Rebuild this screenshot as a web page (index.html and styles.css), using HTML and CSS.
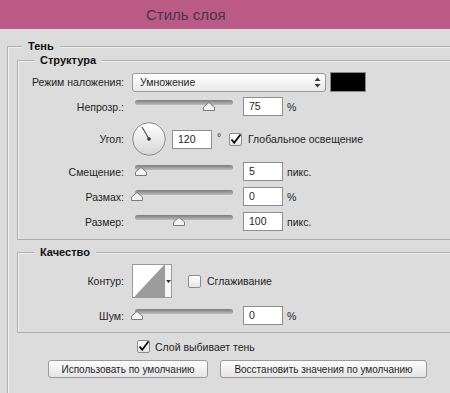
FILE: index.html
```html
<!DOCTYPE html>
<html lang="ru">
<head>
    <meta charset="UTF-8">
    <title>Стиль слоя</title>
    <link rel="stylesheet" href="styles.css">
</head>
<body>
    <div class="titlebar">Стиль слоя</div>
    <div class="dialog">
        <div class="group group-outer">
            <div class="group-title">Тень</div>

            <div class="group group-inner">
                <div class="group-title">Структура</div>
                <div class="rows rows-structure">
                    <div class="row row-blend">
                        <span class="label">Режим наложения:</span>
                        <div class="select">
                            <span>Умножение</span>
                            <svg width="7" height="11" viewBox="0 0 7 11"><path d="M3.5 0.5 L6.5 4 L0.5 4 Z M0.5 7 L6.5 7 L3.5 10.5 Z" fill="#3a3a3a"/></svg>
                        </div>
                        <div class="swatch"></div>
                    </div>

                    <div class="row">
                        <span class="label">Непрозр.:</span>
                        <div class="slider">
                            <div class="track"></div>
                            <svg class="thumb" style="left: 71px" viewBox="0 0 12 9"><path d="M6 0.5 L11.5 5 L11.5 8.5 L0.5 8.5 L0.5 5 Z" fill="#f4f4f4" stroke="#7a7a7a"/></svg>
                        </div>
                        <div class="field">75</div>
                        <span class="unit">%</span>
                    </div>

                    <div class="row row-angle">
                        <span class="label">Угол:</span>
                        <svg class="dial" width="34" height="34" viewBox="0 0 34 34">
                            <defs>
                                <linearGradient id="dialFill" x1="0" y1="0" x2="0" y2="1">
                                    <stop offset="0" stop-color="#ffffff"/>
                                    <stop offset="1" stop-color="#d6d6d6"/>
                                </linearGradient>
                            </defs>
                            <circle cx="17" cy="17" r="16.3" fill="url(#dialFill)" stroke="#8a8a8a"/>
                            <line x1="17" y1="17" x2="10" y2="5" stroke="#555" stroke-width="1.2"/>
                            <circle cx="17" cy="17" r="1.8" fill="#333"/>
                        </svg>
                        <div class="field">120</div>
                        <span class="deg">°</span>
                        <span class="check">
                            <svg width="13" height="13" viewBox="0 0 13 13"><path d="M2.5 6.5 L5.2 9.8 L11.5 1.5" fill="none" stroke="#111" stroke-width="1.9"/></svg>
                        </span>
                        <span class="check-text">Глобальное освещение</span>
                    </div>

                    <div class="row">
                        <span class="label">Смещение:</span>
                        <div class="slider">
                            <div class="track"></div>
                            <svg class="thumb" style="left: 3px" viewBox="0 0 12 9"><path d="M6 0.5 L11.5 5 L11.5 8.5 L0.5 8.5 L0.5 5 Z" fill="#f4f4f4" stroke="#7a7a7a"/></svg>
                        </div>
                        <div class="field">5</div>
                        <span class="unit">пикс.</span>
                    </div>

                    <div class="row">
                        <span class="label">Размах:</span>
                        <div class="slider">
                            <div class="track"></div>
                            <svg class="thumb" style="left: -1px" viewBox="0 0 12 9"><path d="M6 0.5 L11.5 5 L11.5 8.5 L0.5 8.5 L0.5 5 Z" fill="#f4f4f4" stroke="#7a7a7a"/></svg>
                        </div>
                        <div class="field">0</div>
                        <span class="unit">%</span>
                    </div>

                    <div class="row">
                        <span class="label">Размер:</span>
                        <div class="slider">
                            <div class="track"></div>
                            <svg class="thumb" style="left: 41px" viewBox="0 0 12 9"><path d="M6 0.5 L11.5 5 L11.5 8.5 L0.5 8.5 L0.5 5 Z" fill="#f4f4f4" stroke="#7a7a7a"/></svg>
                        </div>
                        <div class="field">100</div>
                        <span class="unit">пикс.</span>
                    </div>
                </div>
            </div>

            <div class="group group-inner group-quality">
                <div class="group-title">Качество</div>
                <div class="rows rows-quality">
                    <div class="row row-contour">
                        <span class="label">Контур:</span>
                        <div class="contour">
                            <div class="contour-curve">
                                <svg width="31" height="32" viewBox="0 0 31 32"><path d="M2 31 L31 0 L31 32 L2 32 Z" fill="#9c9c9c"/></svg>
                            </div>
                            <div class="contour-drop">
                                <svg width="5" height="3" viewBox="0 0 5 3"><path d="M0 0 L5 0 L2.5 3 Z" fill="#333"/></svg>
                            </div>
                        </div>
                        <span class="check check-smooth"></span>
                        <span class="check-text">Сглаживание</span>
                    </div>

                    <div class="row">
                        <span class="label">Шум:</span>
                        <div class="slider">
                            <div class="track"></div>
                            <svg class="thumb" style="left: -1px" viewBox="0 0 12 9"><path d="M6 0.5 L11.5 5 L11.5 8.5 L0.5 8.5 L0.5 5 Z" fill="#f4f4f4" stroke="#7a7a7a"/></svg>
                        </div>
                        <div class="field">0</div>
                        <span class="unit">%</span>
                    </div>
                </div>
            </div>

            <div class="knockout">
                <span class="check">
                    <svg width="13" height="13" viewBox="0 0 13 13"><path d="M2.5 6.5 L5.2 9.8 L11.5 1.5" fill="none" stroke="#111" stroke-width="1.9"/></svg>
                </span>
                <span class="check-text">Слой выбивает тень</span>
            </div>

            <div class="buttons">
                <button class="btn btn-default">Использовать по умолчанию</button>
                <button class="btn btn-reset">Восстановить значения по умолчанию</button>
            </div>
        </div>
    </div>
</body>
</html>
```

FILE: styles.css
```css
body {
    margin: 0;
    background-color: #dcdcdc;
    color: #1f1f1f;
    font-family: "Liberation Sans", Arial, sans-serif;
    font-size: 10.5px;
    overflow: hidden;
}
.titlebar {
    height: 29px;
    line-height: 29px;
    padding-left: 146px;
    background-color: #bb5a85;
    color: #47354a;
    font-size: 15px;
}
.dialog {
    width: 450px;
}
.group {
    border: 1px solid #aeaeae;
    border-right: none;
    box-shadow: inset 1px 1px 0 #f0f0f0;
}
.group-title {
    width: max-content;
    margin: -7px 0 0 16px;
    padding: 0 6px;
    background-color: #dcdcdc;
    font-size: 11px;
    font-weight: bold;
    line-height: 13px;
    color: #111;
}
.group-outer {
    margin: 17px 0 0 7px;
    padding: 0 0 15px 9px;
    border-bottom: none;
}
.group-outer > .group-title {
    margin-left: 5px;
}
.group-inner {
    margin-top: 7px;
}
.group-quality {
    margin-top: 12px;
}
.rows {
    display: flex;
    flex-direction: column;
}
.rows-structure {
    gap: 6px;
    padding: 5px 0 8px;
}
.rows-quality {
    gap: 8px;
    padding: 5px 0 7px;
}
.row {
    display: flex;
    align-items: center;
    height: 19px;
}
.row-blend {
    height: 20px;
    margin-bottom: -1px;
}
.row-angle,
.row-contour {
    height: 34px;
}
.label {
    flex: none;
    width: 106px;
    margin-right: 8px;
    text-align: right;
}
.select {
    display: flex;
    align-items: center;
    justify-content: space-between;
    box-sizing: border-box;
    width: 194px;
    height: 19px;
    margin-right: 4px;
    padding: 0 4px 0 7px;
    border: 1px solid #9a9a9a;
    border-radius: 3px;
    background: linear-gradient(#ffffff, #e9e9e9);
}
.swatch {
    box-sizing: border-box;
    width: 36px;
    height: 20px;
    border: 1px solid #8a8a8a;
    background-color: #000;
}
.slider {
    position: relative;
    flex: none;
    width: 104px;
    height: 19px;
    margin-right: 7px;
}
.track {
    height: 5px;
    margin: 3px 3px 0;
    border-radius: 3px;
    background: linear-gradient(#7c7c7c, #bdbdbd);
}
.thumb {
    position: absolute;
    top: 5px;
    width: 12px;
    height: 9px;
}
.field {
    box-sizing: border-box;
    flex: none;
    width: 40px;
    height: 19px;
    padding-left: 5px;
    line-height: 17px;
    border: 1px solid #8e8e8e;
    background-color: #fff;
}
.unit {
    margin-left: 4px;
}
.dial {
    flex: none;
    margin-right: 6px;
}
.deg {
    align-self: flex-start;
    width: 12px;
    margin: 9px 0 0 5px;
    line-height: 13px;
}
.check {
    box-sizing: border-box;
    flex: none;
    width: 13px;
    height: 13px;
    border: 1px solid #8c8c8c;
    border-radius: 2px;
    background: linear-gradient(#ffffff, #e6e6e6);
}
.check svg {
    display: block;
    margin: -1px 0 0 -1px;
}
.check-text {
    margin-left: 6px;
}
.contour {
    display: flex;
    flex: none;
    height: 34px;
}
.contour-curve {
    box-sizing: border-box;
    width: 33px;
    height: 34px;
    border: 1px solid #9a9a9a;
    background-color: #fff;
}
.contour-curve svg {
    display: block;
}
.contour-drop {
    box-sizing: border-box;
    display: flex;
    align-items: center;
    justify-content: center;
    width: 7px;
    height: 34px;
    border: 1px solid #9a9a9a;
    border-left: none;
    background-color: #f7f7f7;
}
.check-smooth {
    margin-left: 16px;
}
.knockout {
    display: flex;
    align-items: center;
    height: 13px;
    margin: 7px 0 0 120px;
}
.knockout .check-text {
    margin-left: 5px;
}
.buttons {
    display: flex;
    gap: 12px;
    margin: 7px 0 0 31px;
}
.btn {
    height: 18px;
    padding: 0;
    border: 1px solid #9a9a9a;
    border-radius: 3px;
    background: linear-gradient(#fdfdfd, #e4e4e4);
    color: #1f1f1f;
    font-family: "Liberation Sans", Arial, sans-serif;
    font-size: 10px;
}
.btn-default {
    width: 160px;
}
.btn-reset {
    width: 207px;
}
```
